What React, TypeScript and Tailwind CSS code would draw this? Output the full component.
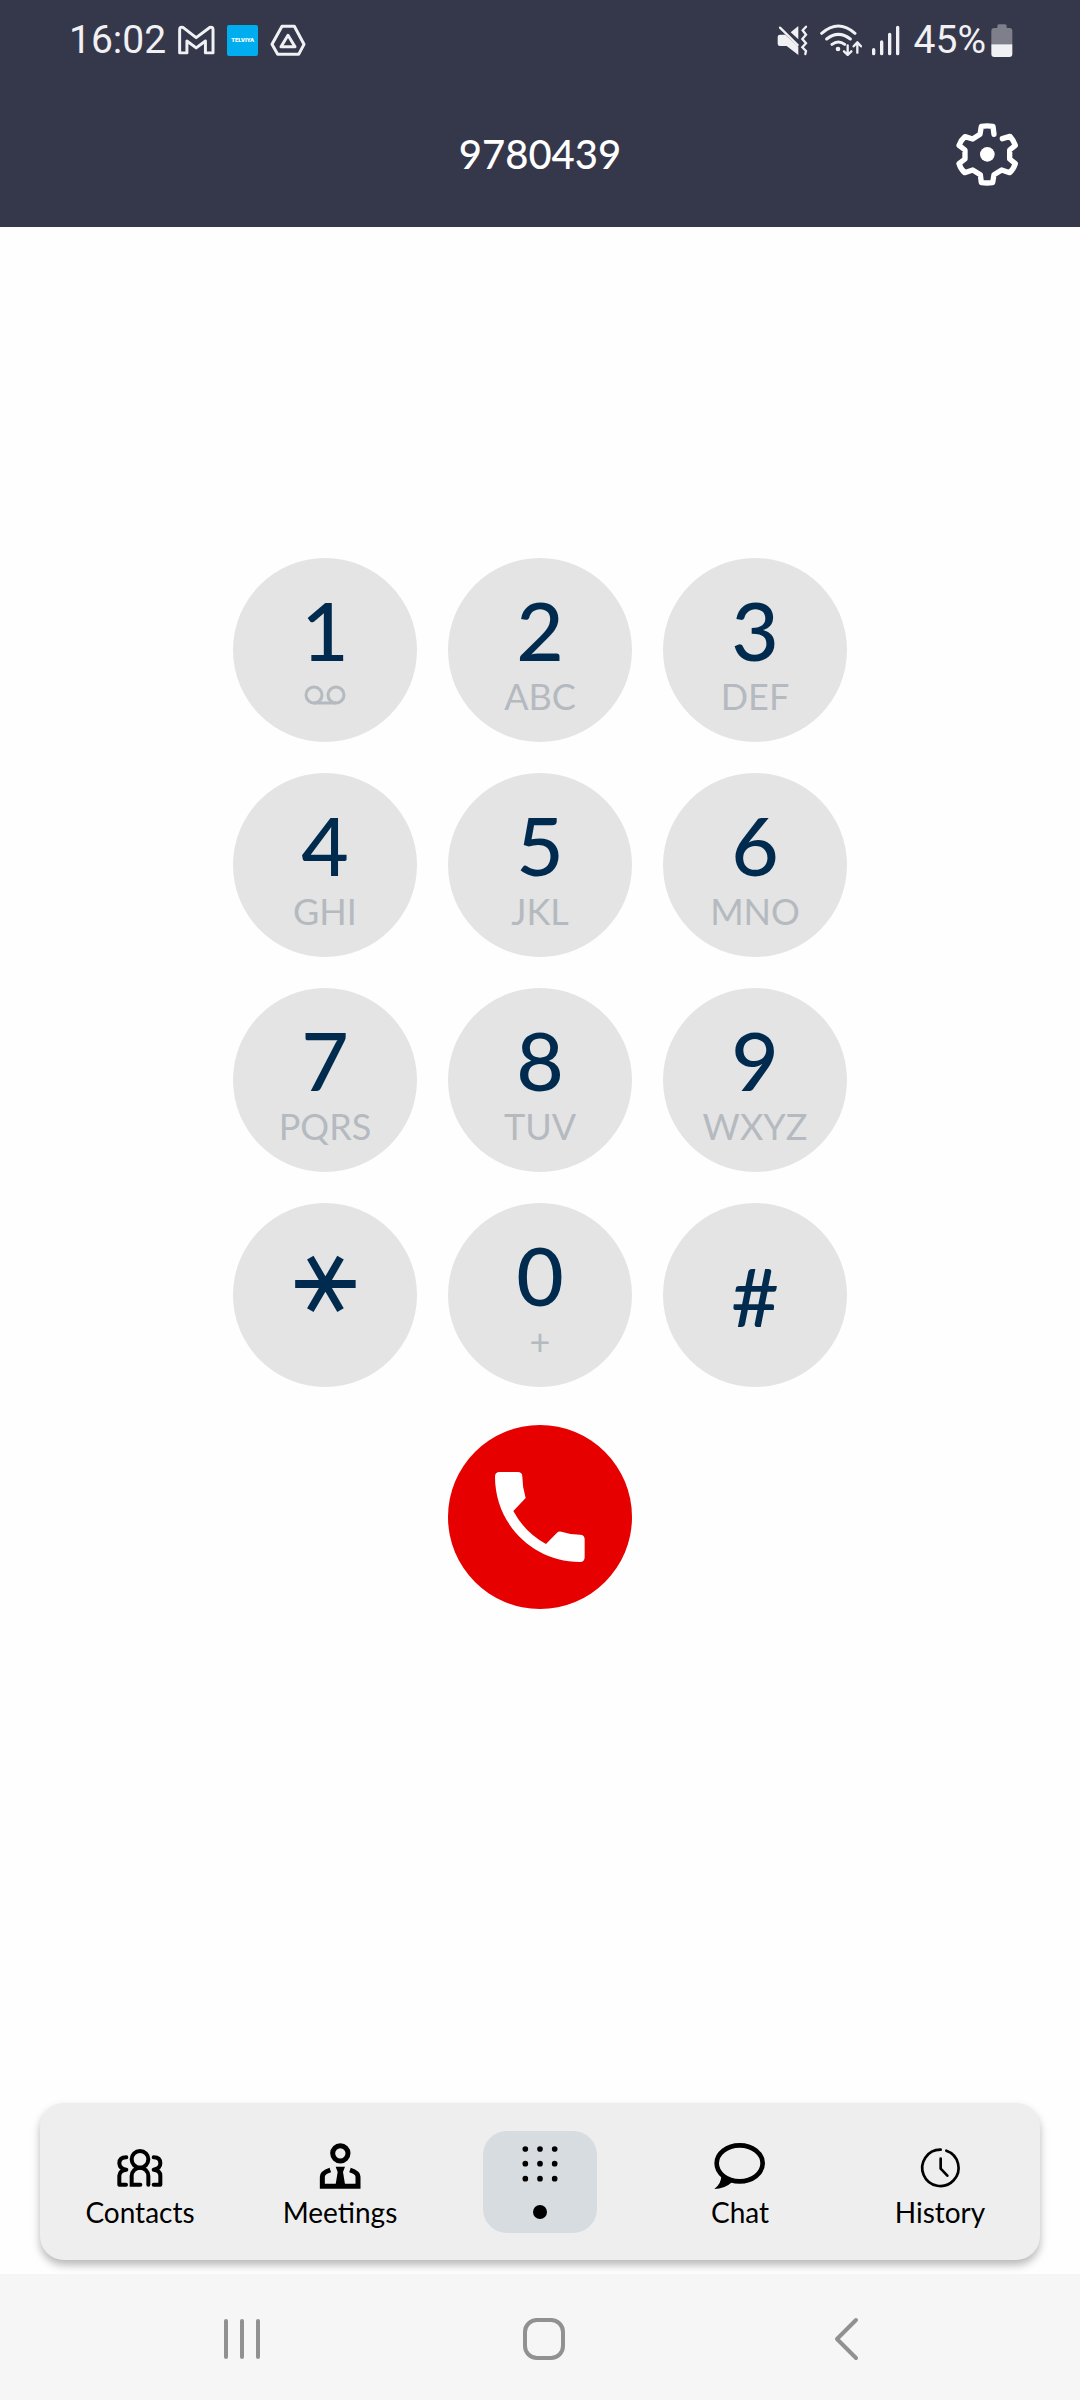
import { useState } from "react";
import clsx from "clsx";

interface Key {
  value: string;
  letters?: string;
}

const keys: Key[] = [
  { value: "1" },
  { value: "2", letters: "ABC" },
  { value: "3", letters: "DEF" },
  { value: "4", letters: "GHI" },
  { value: "5", letters: "JKL" },
  { value: "6", letters: "MNO" },
  { value: "7", letters: "PQRS" },
  { value: "8", letters: "TUV" },
  { value: "9", letters: "WXYZ" },
  { value: "*" },
  { value: "0", letters: "+" },
  { value: "#" },
];

const StatusBar = () => (
  <div className="flex h-20 items-center justify-between pl-[69px] pr-[67px] font-[Roboto,sans-serif] text-[39px] leading-[44px] text-[#f1f1f3]">
    <div className="flex items-center">
      <span>16:02</span>
      <svg className="ml-3 h-[30px] w-[37px]" viewBox="384 70 112 90" fill="none" stroke="currentColor" strokeWidth="9" strokeLinejoin="round">
        <path d="M389 84Q389 74 399 77L439 108L480 77Q490 74 490 84V154H467V118L439 139L411 118V154H389Z" />
      </svg>
      <span className="ml-3 flex size-[31px] items-center justify-center rounded-xs bg-[#00aeef] text-[6px] leading-none font-black text-white">TELVIYA</span>
      <svg className="ml-3 h-[32px] w-[36px]" viewBox="667 69 108 96" fill="none" stroke="currentColor" strokeWidth="9" strokeLinejoin="round">
        <path d="M703 76H740L769 130L753 160H690L673 130Z" />
        <path d="M721 103L742 137H700Z" />
      </svg>
    </div>
    <div className="flex items-center">
      <svg className="h-[32px] w-[32px]" viewBox="76 66 96 96" fill="none" stroke="currentColor" strokeWidth="7" strokeLinecap="round">
        <path d="M78 105Q78 98 85 98H101L140 134V159L105 132H85Q78 132 78 125Z" fill="currentColor" stroke="none" />
        <path d="M117 91L140 72V112Z" fill="currentColor" stroke="none" />
        <path d="M85 77L138 129" />
        <path d="M163 74L153 85L163 98L152 111L163 124L152 136L163 147L161 156" />
      </svg>
      <svg className="ml-[11px] h-[32px] w-[42px]" viewBox="206 66 126 96" fill="none" stroke="currentColor" strokeWidth="9" strokeLinecap="round">
        <path d="M211 94Q261 50 311 94M226 111Q261 83 297 111M242 127Q261 113 280 127" />
        <circle cx="260" cy="141" r="7" fill="currentColor" stroke="none" />
        <path d="M289 130V158M278 148L289 159L300 148M318 152V122M307 133L318 121L329 133" strokeWidth="7" strokeLinejoin="round" />
      </svg>
      <svg className="ml-[9px] h-[32px] w-[30px]" viewBox="358 66 90 96" stroke="currentColor" strokeWidth="10" strokeLinecap="round">
        <path d="M366 143V155M390 120V155M414 97V155M438 76V155" />
      </svg>
      <span className="ml-[13px]">45%</span>
      <svg className="ml-[5px] h-[33px] w-[22px]" viewBox="722 65 66 99">
        <path d="M741 71Q741 66 746 66H764Q769 66 769 71V77H778Q786 77 786 86V126H723V86Q723 77 732 77H741Z" fill="#7e7f8a" />
        <path d="M723 126H786V155Q786 164 777 164H732Q723 164 723 155Z" fill="currentColor" />
      </svg>
    </div>
  </div>
);

const SettingsIcon = () => (
  <svg className="h-[64px] w-[66px]" viewBox="28 24 198 192" fill="none" stroke="currentColor" strokeWidth="16" strokeLinecap="round" strokeLinejoin="round">
    <path d="M148 61L145 37Q127 34 110 37L106 61L84 75L61 68Q49 78 43 94L61 108V135L43 149Q49 167 60 176L84 168L107 182L110 206Q127 208 144 206L148 182L171 168L195 176Q206 167 212 149L195 135V108L212 94Q206 78 196 67L173 74" />
    <circle cx="128" cy="121" r="22" fill="currentColor" stroke="none" />
  </svg>
);

const VoicemailIcon = () => (
  <svg className="h-[44px] w-[42px]" viewBox="0 0 42 44" fill="none" stroke="currentColor" strokeWidth="3">
    <circle cx="10" cy="21" r="8" />
    <circle cx="32" cy="21" r="8" />
    <path d="M10 29H32" />
  </svg>
);

const ContactsIcon = () => (
  <svg className="h-[50px] w-[56px]" viewBox="277 156 168 150" fill="none" stroke="currentColor" strokeWidth="12" strokeLinecap="round">
    <circle cx="361" cy="208" r="25" />
    <path d="M362 284H336V258A25 25 0 0 1 386 258V284" />
    <path d="M320 202Q299 202 299 220Q300 236 320 239Q300 241 299 257V284H319" strokeLinejoin="round" />
    <path d="M402 202Q422 202 422 220Q422 236 402 239Q422 241 422 257V284H402" strokeLinejoin="round" />
  </svg>
);

const MeetingsIcon = () => (
  <svg className="h-[50px] w-[56px]" viewBox="877 156 168 150" fill="none" stroke="currentColor" strokeWidth="15">
    <circle cx="962" cy="190" r="23" />
    <path d="M932 240Q908 248 908 260V289H1015V260Q1015 248 991 240" />
    <path d="M948 230H976L970 246L977 289H947L954 246Z" fill="currentColor" stroke="none" />
  </svg>
);

const DialIcon = () => (
  <svg className="h-[50px] w-[56px]" viewBox="214 148 168 150" fill="currentColor">
    {[178, 222, 267].map((y) => [254, 298, 342].map((x) => <circle key={`${x}-${y}`} cx={x} cy={y} r="8.5" />))}
  </svg>
);

const ChatIcon = () => (
  <svg className="h-[50px] w-[56px]" viewBox="815 156 168 150" fill="none" stroke="currentColor" strokeWidth="14">
    <ellipse cx="898" cy="220" rx="69" ry="54" />
    <path d="M843 255Q844 280 822 297Q852 297 876 276Z" fill="currentColor" stroke="none" />
  </svg>
);

const HistoryIcon = () => (
  <svg className="h-[50px] w-[56px]" viewBox="394 156 168 150" fill="none" stroke="currentColor" strokeWidth="8" strokeLinecap="round" strokeLinejoin="round">
    <path d="M480 179A54.500 54.500 0 1 0 497 182" />
    <path d="M480 206V236L500 257" />
  </svg>
);

const tabs = [
  { id: "contacts", label: "Contacts", icon: <ContactsIcon /> },
  { id: "meetings", label: "Meetings", icon: <MeetingsIcon /> },
  { id: "dial", label: "Keypad", icon: <DialIcon /> },
  { id: "chat", label: "Chat", icon: <ChatIcon /> },
  { id: "history", label: "History", icon: <HistoryIcon /> },
];

const KeyButton = ({ item, onPress }: { item: Key; onPress: (value: string) => void }) => {
  const centered = item.value === "#";
  return (
    <button
      type="button"
      className={clsx("flex size-[184px] flex-col items-center rounded-full bg-[#e4e4e4] text-[#002b4e]", centered ? "justify-center" : "pt-[29px]")}
      onClick={() => onPress(item.value)}
    >
      {item.value === "*" ? (
        <span className="font-['DejaVu_Sans',sans-serif] text-[108px] leading-[84px]">⚹</span>
      ) : (
        <span className="text-[82px] leading-[84px] font-medium">{item.value}</span>
      )}
      <span className="mt-[3px] text-[36px] leading-[44px] text-[#b4babf] empty:hidden">
        {item.value === "1" ? <VoicemailIcon /> : item.letters}
      </span>
    </button>
  );
};

const App = () => {
  const [activeTab, setActiveTab] = useState("dial");
  const [, setDialed] = useState("");

  return (
    <div className="flex min-h-screen flex-col bg-[#fefefe] font-[Lato,sans-serif]">
      <header className="bg-[#35374b] text-white">
        <StatusBar />
        <div className="grid h-[147px] grid-cols-[1fr_auto_1fr] items-center px-[60px]">
          <h1 className="col-start-2 text-[40px] leading-[48px] font-medium">9780439</h1>
          <button type="button" className="justify-self-end" aria-label="Settings">
            <SettingsIcon />
          </button>
        </div>
      </header>

      <main className="flex flex-1 flex-col items-center pt-[331px]">
        <div className="grid grid-cols-3 gap-[31px]">
          {keys.map((item) => (
            <KeyButton key={item.value} item={item} onPress={(value) => setDialed((prev) => prev + value)} />
          ))}
        </div>
        <button type="button" aria-label="Call" className="mt-[38px] flex size-[184px] items-center justify-center rounded-full bg-[#e60000] text-white">
          <svg className="h-[90px] w-[90px]" viewBox="194 216 270 270" fill="currentColor">
            <path d="M208 216H262Q276 216 276 230Q276 262 286 294L249 333Q284 398 347 432L380 398Q385 393 393 395Q420 404 449 404Q463 404 463 418V472Q463 486 449 486C307 486 194 372 194 230Q194 216 208 216Z" />
          </svg>
        </button>
      </main>

      <nav className="mx-10 mb-[14px] grid h-[157px] grid-cols-5 place-items-center rounded-3xl bg-[#eeeeee] text-black shadow-[0_5px_8px_rgba(0,0,0,0.28)]">
        {tabs.map((tab) => {
          const active = tab.id === activeTab;
          return (
            <button
              key={tab.id}
              type="button"
              aria-label={tab.label}
              className={clsx("flex h-[102px] min-w-[114px] flex-col items-center rounded-3xl", active ? "bg-[#d7dce0] pt-2" : "pt-[11px]")}
              onClick={() => setActiveTab(tab.id)}
            >
              {tab.icon}
              {active ? (
                <span className="mt-4 size-[14px] rounded-full bg-black" />
              ) : (
                <span className="text-[28px] leading-[41px]">{tab.label}</span>
              )}
            </button>
          );
        })}
      </nav>

      <footer className="grid h-[126px] grid-cols-3 place-items-center bg-[#f6f6f6] pt-1 pl-[91px] pr-[83px] text-[#919191]">
        <button type="button" aria-label="Recent apps">
          <svg className="size-11" viewBox="0 0 44 44" stroke="currentColor" strokeWidth="4" strokeLinecap="round">
            <path d="M6 4V40M22 4V40M38 4V40" />
          </svg>
        </button>
        <button type="button" aria-label="Home">
          <svg className="size-11" viewBox="0 0 44 44" fill="none" stroke="currentColor" strokeWidth="4">
            <rect x="3" y="3" width="38" height="38" rx="12" />
          </svg>
        </button>
        <button type="button" aria-label="Back">
          <svg className="size-11" viewBox="0 0 44 44" fill="none" stroke="currentColor" strokeWidth="4" strokeLinecap="round" strokeLinejoin="round">
            <path d="M32 3L13 22L32 41" />
          </svg>
        </button>
      </footer>
    </div>
  );
};

export default App;
